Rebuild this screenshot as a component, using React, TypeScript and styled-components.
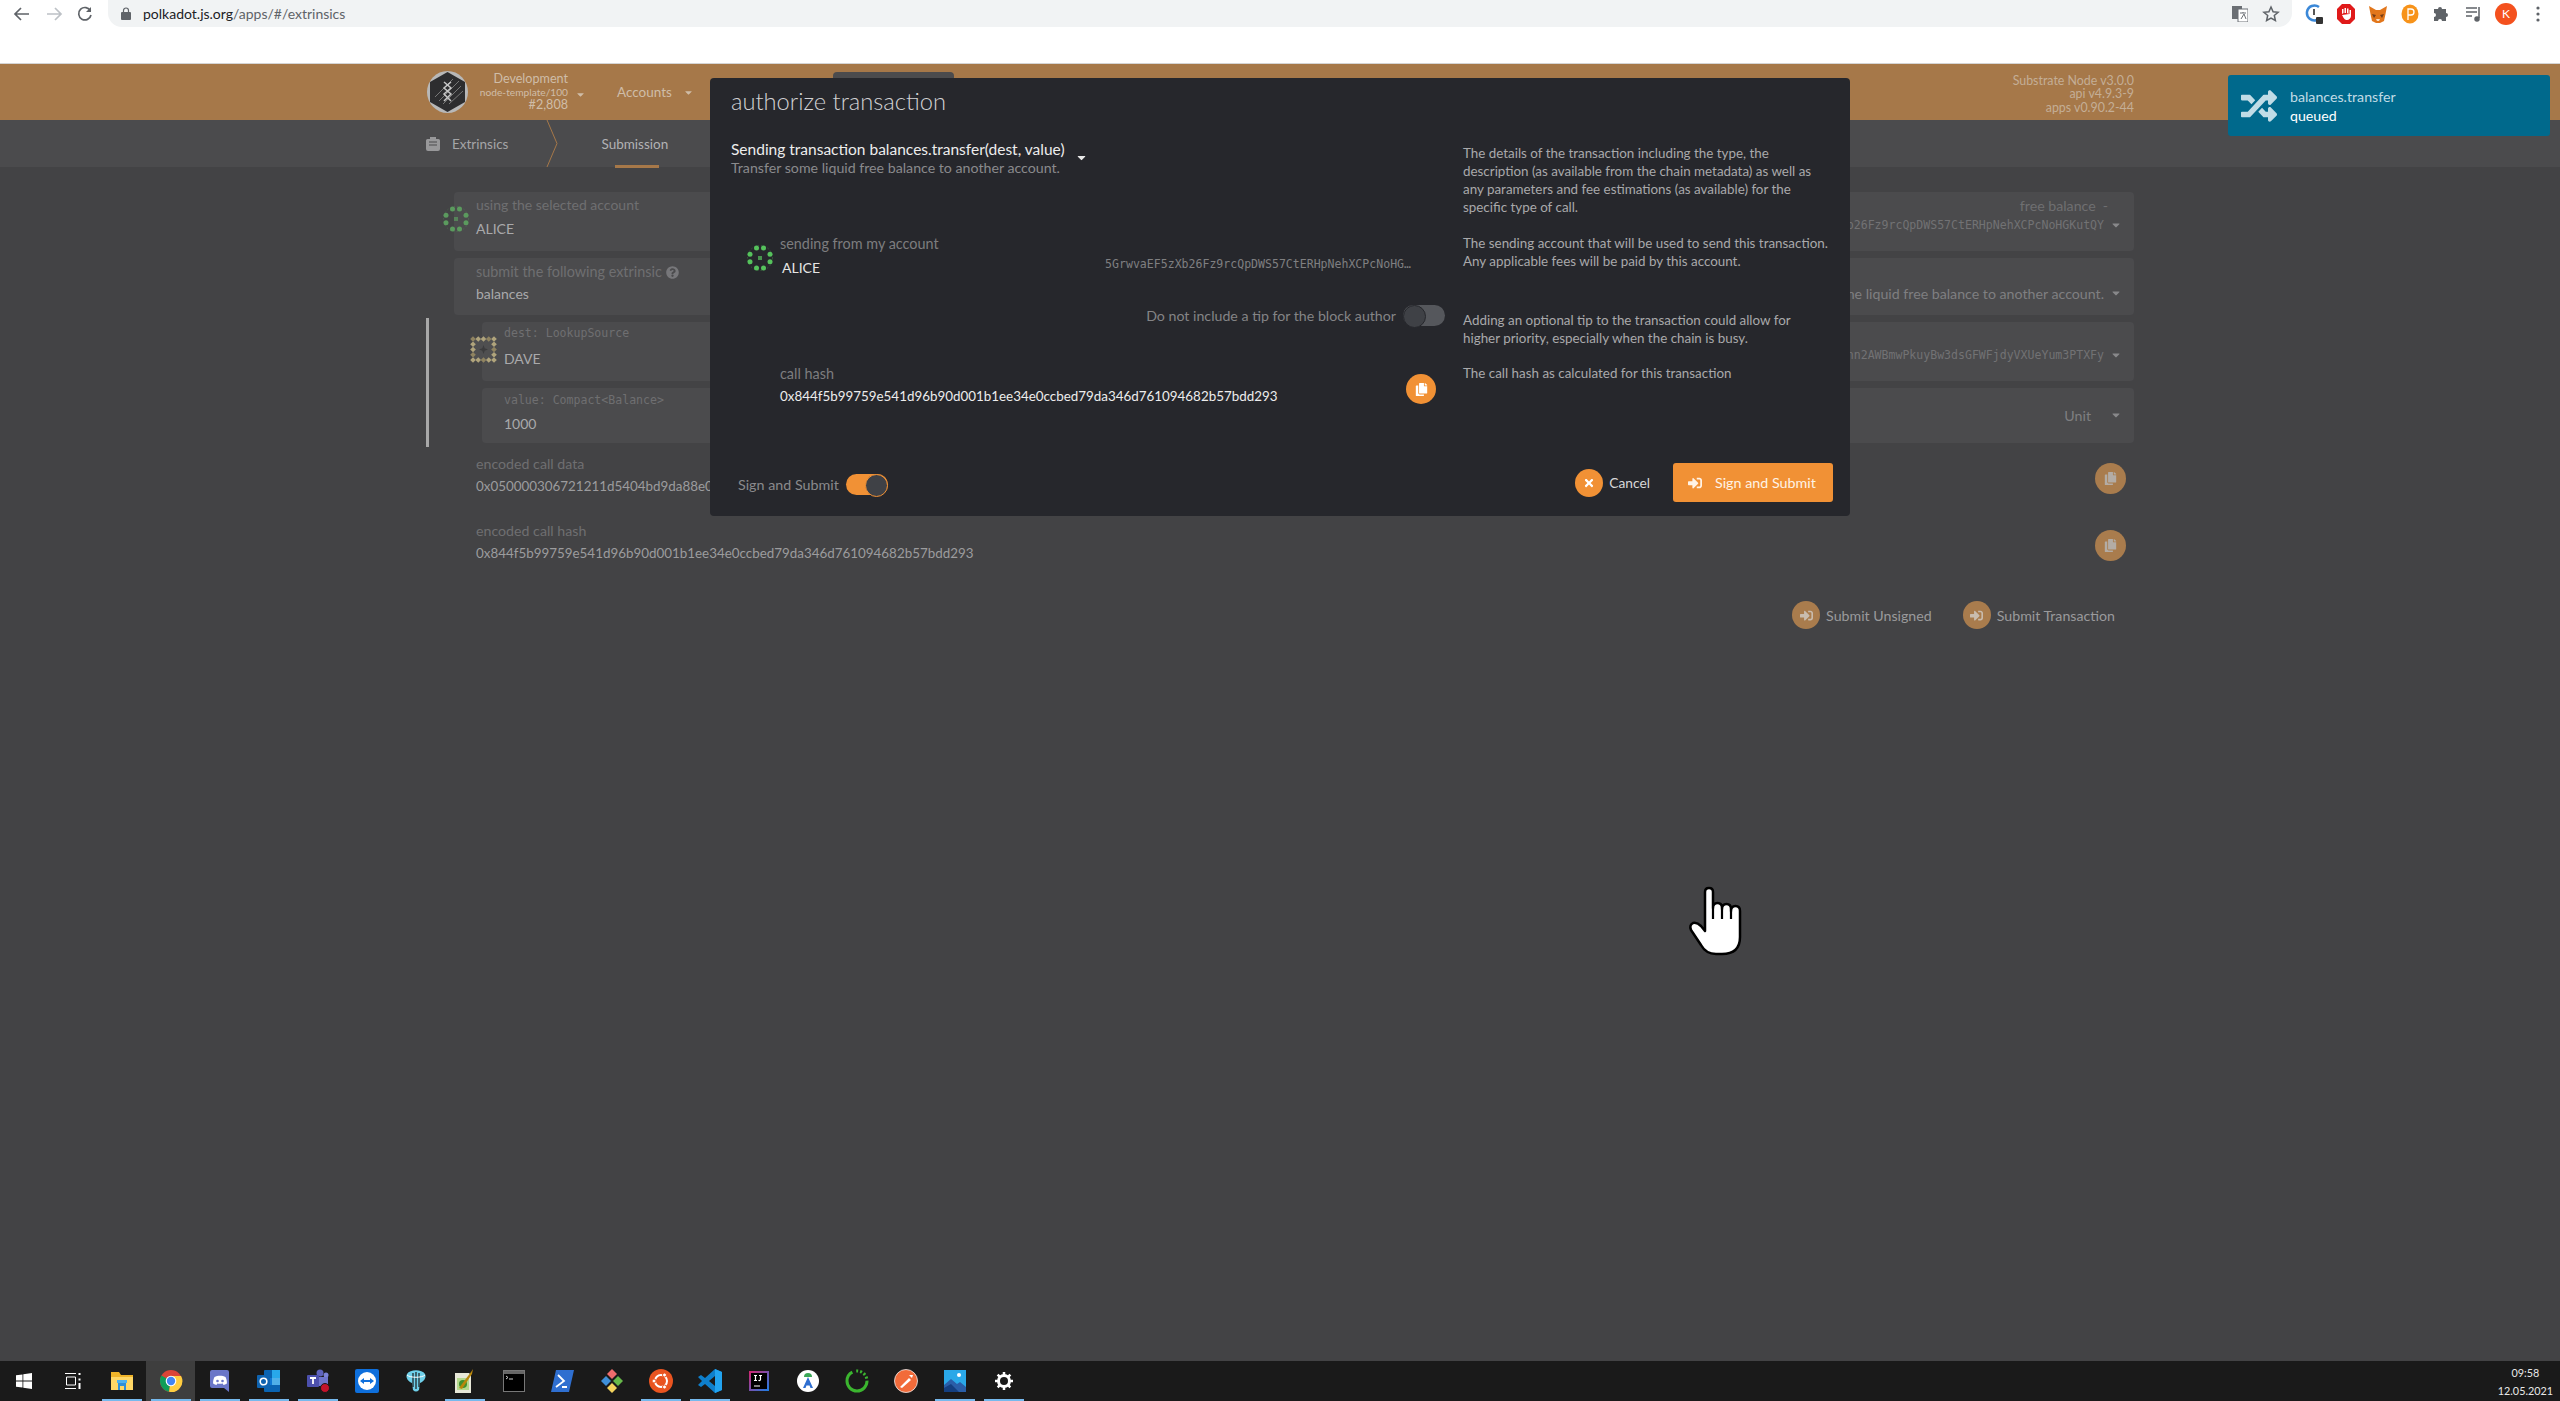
import React from "react";
import styled, { createGlobalStyle } from "styled-components";
import { FaCaretDown, FaCopy, FaRandom, FaSignInAlt, FaTimes, FaQuestionCircle } from "react-icons/fa";

const Global = createGlobalStyle`
  html, body { margin: 0; padding: 0; height: 100%; background: #434345; overflow: hidden; }
  #root { height: 100%; }
  * { box-sizing: border-box; }
`;
const SANS = `"Lato", "Open Sans", sans-serif`;
const MONO = `"DejaVu Sans Mono", "Liberation Mono", monospace`;

const Page = styled.div`position: relative; width: 2560px; height: 1401px; display: flex; flex-direction: column; font-family: ${SANS}; overflow: hidden; background: #434345;`;

/* Browser chrome */
const Chrome = styled.div`height: 64px; background: #fff; border-bottom: 1px solid #d4d4d4; flex: none;`;
const ChromeBar = styled.div`height: 37px; display: flex; align-items: flex-start; padding-left: 13px;`;
const NavIcons = styled.div`display: flex; gap: 14px; width: 95px; height: 27px; align-items: center;`;
const Omnibox = styled.div`width: 2184px; height: 27px; background: #f1f3f4; border-radius: 0 0 14px 14px; display: flex; align-items: center; padding-left: 13px; padding-right: 12px;`;
const Url = styled.div`font-size: 14px; color: #5f6368; margin-left: 12px; flex: 1;`;
const UrlHost = styled.span`color: #202124;`;
const OmniIcons = styled.div`display: flex; gap: 14px; align-items: center; padding-right: 0;`;
const ExtIcons = styled.div`display: flex; align-items: center; height: 27px; gap: 0; padding-left: 6px;`;
const ExtSlot = styled.div`width: 32px; display: flex; justify-content: center; align-items: center;`;
const Avatar = styled.div`width: 22px; height: 22px; border-radius: 50%; background: #f4511e; color: #fff; font-size: 12px; display: flex; align-items: center; justify-content: center;`;

/* App header */
const Header = styled.div`height: 56px; background: #a67849; flex: none; display: flex; align-items: center; padding: 0 426px 0 427px;`;
const Logo = styled.svg`width: 41px; height: 42px; flex: none;`;
const Chain = styled.div`width: 100px; display: flex; flex-direction: column; align-items: flex-end; font-size: 12.6px; color: #cfbda8; line-height: 14px; white-space: nowrap;`;
const ChainInfo = styled.div`font-size: 10.2px; line-height: 12px;`;
const Caret = styled(FaCaretDown)<{ $size?: number; $color?: string }>`
  width: ${p => p.$size ?? 12}px; height: ${p => p.$size ?? 12}px; color: ${p => p.$color ?? "#cfbda8"}; flex: none;
`;
const ChainCaret = styled.div`margin: 0 0 0 7px; padding-top: 2px; width: 12px;`;
const NavItem = styled.div`margin-left: 30px; width: 57px; font-size: 13.5px; color: #cfbda8; white-space: nowrap;`;
const NavCaret = styled.div`margin-left: 9px; display: flex;`;
const NavTabStub = styled.div`width: 121px; height: 48px; align-self: flex-end; margin-left: 139px; background: #4b4b4d; border-radius: 4px 4px 0 0;`;
const Version = styled.div`margin-left: auto; text-align: right; font-size: 12.4px; line-height: 13.5px; color: #c4ae96; padding-top: 4px;`;

/* Tabs */
const TabsBar = styled.div`height: 47px; background: #4b4b4d; flex: none; display: flex; align-items: stretch; padding-left: 426px;`;
const TabIcon = styled.svg`width: 14px; height: 14px; align-self: center; margin-right: 12px;`;
const Tab = styled.div<{ $active?: boolean }>`
  display: flex; align-items: center; position: relative; font-size: 13.5px; color: #a5a5a7; white-space: nowrap;
  ${p => p.$active && `
    margin-left: 43px; color: #b2b2b4;
    &::after { content: ""; position: absolute; left: 14px; width: 44px; bottom: -1px; height: 3px; background: #a67849; }
  `}
`;
const TabChevron = styled.svg`width: 12px; height: 47px; margin-left: 38px; flex: none;`;

/* Page body */
const Main = styled.main`flex: 1; min-height: 0; padding: 25px 0 0 454px; width: 2134px;`;
const Card = styled.div<{ $h: number }>`
  height: ${p => p.$h}px; background: #4b4b4d; border-radius: 4px; position: relative; padding-left: 22px; display: flex; justify-content: space-between;
  margin-bottom: 7px;
`;
const CardLeft = styled.div<{ $top: number }>`padding-top: ${p => p.$top}px; display: flex; flex-direction: column;`;
const CardLabel = styled.div`font-size: 14px; line-height: 18px; color: #6f6f71; white-space: nowrap; display: flex; align-items: center; gap: 4px;`;
const CardLabelWide = styled(CardLabel)`font-size: 14.4px;`;
const MonoLabel = styled.div`font-family: ${MONO}; font-size: 11.55px; line-height: 18px; color: #6f6f71; white-space: nowrap;`;
const CardValue = styled.div<{ $top: number }>`font-size: 14px; line-height: 18px; color: #a9a9ab; margin-top: ${p => p.$top}px; white-space: nowrap;`;
const CardRight = styled.div<{ $top: number }>`display: flex; flex-direction: column; align-items: flex-end; padding: ${p => p.$top}px 12px 0 0;`;
const CardRightRow = styled.div<{ $inset?: number }>`display: flex; align-items: center; gap: 6px; height: 18px; padding-right: ${p => p.$inset ?? 0}px; color: #7f7f81; font-size: 14.2px; white-space: nowrap;`;
const FreeRow = styled(CardRightRow)`margin-bottom: 2px; gap: 7px; color: #6f6f71;`;
const UnitRow = styled(CardRightRow)`gap: 19px;`;
const DimMono = styled.span`font-family: ${MONO}; font-size: 11.55px; color: #727274;`;
const Identicon = styled.svg<{ $left: number; $top: number; $size: number }>`
  position: absolute; left: ${p => p.$left}px; top: ${p => p.$top}px; width: ${p => p.$size}px; height: ${p => p.$size}px;
`;
const ParamGroup = styled.div`margin: -4px 0 -6px -28px; padding: 4px 0 4px 53px; border-left: 3px solid #a8a8a8;`;
const LastCard = styled(Card)`margin-bottom: 0;`;
const Encoded = styled.div`height: 67px; display: flex; align-items: center; justify-content: space-between; padding: 0 8px 0 22px;`;
const EncodedLabel = styled.div`font-size: 14.2px; line-height: 18px; color: #6f6f71;`;
const EncodedValue = styled.div`font-size: 13.4px; line-height: 18px; margin-top: 4px; color: #9c9c9e; white-space: nowrap;`;
const EncodedCopy = styled.div`margin-top: 8px;`;
const RoundBtn = styled.div<{ $size: number; $bg: string; $fg: string; $icon?: number }>`
  width: ${p => p.$size}px; height: ${p => p.$size}px; border-radius: 50%; background: ${p => p.$bg}; color: ${p => p.$fg};
  display: flex; align-items: center; justify-content: center; flex: none;
  svg { width: ${p => p.$icon ?? 13}px; height: ${p => p.$icon ?? 13}px; }
`;
const Actions = styled.div`display: flex; justify-content: flex-end; gap: 31px; padding-right: 19px; margin-top: 26px;`;
const Action = styled.div`display: flex; align-items: center; gap: 6px; font-size: 14.2px; color: #9a9a9c; white-space: nowrap;`;

/* Modal */
const Modal = styled.div`position: absolute; left: 710px; top: 78px; width: 1140px; height: 438px; background: #26272c; border-radius: 4px; display: flex; flex-direction: column;`;
const ModalTitle = styled.h1`margin: 0; height: 57px; padding: 8px 0 0 21px; font-size: 23.7px; line-height: 30px; font-weight: 300; color: #d2d2d4; white-space: nowrap;`;
const ModalGrid = styled.div`display: grid; grid-template-columns: 714px 1fr; grid-template-rows: 95px 70px 60px 90px; column-gap: 18px; padding-left: 21px;`;
const Cell = styled.div`padding-top: 5px; min-width: 0;`;
const Help = styled.div<{ $top: number }>`padding-top: ${p => p.$top}px; font-size: 13.4px; line-height: 18px; color: #a9a9ab; white-space: nowrap;`;
const TxRow = styled.div`display: flex; gap: 10px;`;
const TxText = styled.div`font-size: 15.5px; line-height: 18px; color: #ededed; white-space: nowrap;`;
const TxMeta = styled.div`font-size: 14.2px; line-height: 18px; margin-top: 1px; color: #8a8a8c; white-space: nowrap;`;
const TxCaret = styled.div`padding-top: 11px; display: flex;`;
const Sender = styled.div`position: relative; display: flex; justify-content: space-between; padding: 0 34px 0 49px;`;
const SmallLabel = styled.div`font-size: 14.4px; line-height: 18px; color: #7d7d7f; white-space: nowrap;`;
const SenderName = styled.div`font-size: 14px; line-height: 18px; margin: 6px 0 0 2px; color: #e5e5e5;`;
const Address = styled.div`font-family: ${MONO}; font-size: 11.55px; line-height: 18px; margin-top: 20px; color: #7f7f81; white-space: nowrap;`;
const TipRow = styled.div`display: flex; justify-content: flex-end; align-items: center; gap: 7px; font-size: 14.2px; color: #848486; white-space: nowrap; height: 21px;`;
const Toggle = styled.div<{ $on?: boolean }>`
  width: 42px; height: 21px; border-radius: 11px; flex: none; position: relative; background: ${p => (p.$on ? "#f19135" : "#55575c")};
  &::after { content: ""; position: absolute; top: 0; ${p => (p.$on ? "right: 0;" : "left: 0;")} width: 21px; height: 21px; border-radius: 50%; background: #3f4146; border: 1px solid ${p => (p.$on ? "#f19135" : "#26272c")}; }
`;
const HashRow = styled.div`display: flex; justify-content: space-between; padding: 0 9px 0 49px;`;
const HashValue = styled.div`font-size: 13.4px; line-height: 18px; margin-top: 4px; color: #ededed; white-space: nowrap;`;
const HashCopy = styled.div`margin-top: 9px;`;
const Footer = styled.div`margin-top: auto; padding: 0 17px 14px 28px; display: flex; align-items: center;`;
const FootLabel = styled.div`font-size: 14.3px; color: #8a8a8c; margin-right: 7px; white-space: nowrap; padding-top: 3px;`;
const FootToggle = styled.div`padding-top: 3px;`;
const CancelBtn = styled.div`margin-left: auto; display: flex; align-items: center; gap: 6px; font-size: 13.8px; color: #d8d8d8;`;
const Primary = styled.div`width: 160px; height: 39px; margin-left: 23px; background: #f19135; border-radius: 3px; color: #fff3e6; font-size: 14.3px; display: flex; align-items: center; padding-left: 15px; gap: 13px; svg { width: 14px; height: 14px; }`;

/* Toast */
const Toast = styled.div`position: absolute; left: 2228px; top: 75px; width: 322px; height: 61px; background: #00698c; border-radius: 3px; display: flex; align-items: center; padding-left: 13px; color: #c0dce6; svg { width: 36px; height: 36px; flex: none; }`;
const ToastText = styled.div`margin-left: 13px; font-size: 14.2px; line-height: 19px;`;
const ToastStatus = styled.div`color: #fff;`;

const Cursor = styled.svg`position: absolute; left: 1660px; top: 860px; width: 120px; height: 110px;`;

/* Taskbar */
const Taskbar = styled.div`height: 40px; background: #1a1a1a; flex: none; display: flex; align-items: stretch;`;
const Start = styled.div`width: 48px; display: flex; align-items: center; justify-content: center;`;
const TaskSlot = styled.div<{ $running?: boolean; $active?: boolean }>`
  width: 49px; position: relative; display: flex; align-items: center; justify-content: center; flex: none;
  background: ${p => (p.$active ? "#3e3e3e" : "transparent")};
  ${p => p.$running && `&::after { content: ""; position: absolute; left: 5px; right: 4px; bottom: 0; height: 2px; background: #76b9ed; }`}
`;
const Clock = styled.div`margin-left: auto; padding: 3px 7px 0 0; text-align: center; font-size: 10.8px; line-height: 18px; color: #e8e8e8;`;

const dots: [number, number][] = [[9.5, 3], [16.5, 3], [9.5, 23], [16.5, 23], [3, 9.3], [3, 16.7], [23, 9.3], [23, 16.7]];
const PolkaIcon: React.FC<{ color: string; left: number; top: number }> = ({ color, left, top }) => (
  <Identicon $left={left} $top={top} $size={26} viewBox="0 0 26 26">
    <circle cx="13" cy="13" r="12.5" fill="none" stroke={color} strokeOpacity=".3" strokeDasharray="1.5 2" />
    {dots.map(([x, y]) => <circle key={`${x}-${y}`} cx={x} cy={y} r="2.5" fill={color} />)}
    <rect x="11" y="11" width="4" height="4" fill={color} fillOpacity=".7" />
  </Identicon>
);
const DaveIcon: React.FC<{ left: number; top: number }> = ({ left, top }) => {
  const pts = [0, 1, 2, 3, 4];
  const cells: [number, number][] = [];
  pts.forEach(i => pts.forEach(j => { if (i === 0 || i === 4 || j === 0 || j === 4) cells.push([i, j]); }));
  return (
    <Identicon $left={left} $top={top} $size={27} viewBox="0 0 27 27">
      <rect x="3" y="3" width="21" height="21" fill="#4f4f50" />
      {cells.map(([i, j]) => <path key={`${i}${j}`} d={`M${3 + i * 5.25} ${0.2 + j * 5.25}l2.8 2.8-2.8 2.8-2.8-2.8z`} fill={(i + j) % 3 === 0 ? "#8f8360" : "#b0a47c"} />)}
      <path d="M13.5 9l1.2 3.3 3.3 1.2-3.3 1.2-1.2 3.3-1.2-3.3L9 13.5l3.3-1.2z" fill="#3c3c3d" />
    </Identicon>
  );
};

const TaskIcon: React.FC<{ k: string }> = ({ k }) => {
  switch (k) {
    case "view": return <svg width="18" height="18" viewBox="0 0 18 18" fill="none" stroke="#fff"><path d="M1 1.5h11M1 16.5h11M2.5 5h9v8h-9z" /><path d="M15.5 1v2M15.5 6.5v2M15.5 11v6" strokeWidth="2" /></svg>;
    case "explorer": return <svg width="24" height="22" viewBox="0 0 24 22"><path d="M1 2h8l2 3h12v15H1z" fill="#f0b429" /><path d="M1 7h22v13H1z" fill="#ffd766" /><path d="M8 12h8v8h-2v-4h-4v4H8z" fill="#2f8fd8" /><rect x="7" y="10" width="10" height="3" fill="#4db1ee" /></svg>;
    case "chrome": return <svg width="24" height="24" viewBox="0 0 24 24"><circle cx="12" cy="12" r="11" fill="#db4437" /><path d="M12 12L2.4 6.5A11 11 0 0 0 10 22.8z" fill="#0f9d58" /><path d="M12 7h10.1a11 11 0 0 1-12 15.8z" fill="#ffcd40" /><circle cx="12" cy="12" r="5.3" fill="#fff" /><circle cx="12" cy="12" r="4.2" fill="#4285f4" /></svg>;
    case "discord": return <svg width="20" height="24" viewBox="0 0 20 24"><path d="M2 1h15a2 2 0 0 1 2 2v20l-5-4H2a2 2 0 0 1-2-2V3a2 2 0 0 1 2-2z" fill="#6a76c8" /><path d="M4.5 8c3-1.6 8-1.6 11 0 1 2 1.5 4 1.4 6.5-1.2.8-2.4 1.2-3.4 1.4l-.8-1.4c-1.8.4-3.6.4-5.4 0l-.8 1.4c-1-.2-2.2-.6-3.4-1.4C3 12 3.500 10 4.500 8z" fill="#fff" /><circle cx="7.500" cy="12" r="1.300" fill="#6a76c8" /><circle cx="12.500" cy="12" r="1.300" fill="#6a76c8" /></svg>;
    case "outlook": return <svg width="24" height="24" viewBox="0 0 24 24"><rect x="7" y="1" width="16" height="22" rx="1" fill="#0a64b2" /><rect x="15" y="1" width="8" height="8" fill="#28a8ea" /><rect x="7" y="9" width="8" height="7" fill="#0f78d4" /><rect x="15" y="9" width="8" height="7" fill="#50b0e8" /><rect x="0" y="6" width="13" height="13" rx="1" fill="#0f63b0" /><circle cx="6.500" cy="12.500" r="3.300" fill="none" stroke="#fff" strokeWidth="1.600" /></svg>;
    case "teams": return <svg width="24" height="24" viewBox="0 0 24 24"><circle cx="14" cy="4" r="3.500" fill="#5f63bd" /><circle cx="20" cy="6" r="2.500" fill="#7b83d8" /><path d="M10 8h12v9H10z" fill="#6f75cc" /><rect x="1" y="6" width="12" height="12" rx="1" fill="#4c50ad" /><path d="M4 9h6M7 9v6" stroke="#fff" strokeWidth="1.800" /><circle cx="19" cy="19" r="4.500" fill="#c4132c" stroke="#1a1a1a" /></svg>;
    case "teamviewer": return <svg width="24" height="24" viewBox="0 0 24 24"><rect width="24" height="24" rx="2" fill="#0e6fdc" /><circle cx="12" cy="12" r="9" fill="#fff" /><path d="M5 12l4-3v2h6V9l4 3-4 3v-2H9v2z" fill="#0e6fdc" /></svg>;
    case "sketch": return <svg width="24" height="24" viewBox="0 0 24 24"><path d="M3 5c3-5 15-5 18 0 2 4-2 8-5 9l-1 7c-2 2-4 2-6 0l-1-7C5 13 1 9 3 5z" fill="#6fd0ea" /><path d="M9 4v14M12 3v17M15 4v14" stroke="#1a1a1a" strokeWidth="1.200" /><path d="M3 6c3 3 15 3 18 0" fill="none" stroke="#fff" /></svg>;
    case "npp": return <svg width="24" height="25" viewBox="0 0 24 25"><path d="M2 4h14l2 2v18H2z" fill="#e8e8d8" /><rect x="4" y="9" width="12" height="12" fill="#b4d88c" /><circle cx="10" cy="15" r="4" fill="#3f8f2f" /><path d="M6 19l12-16 2-3-1 5L9 20z" fill="#b8860b" /></svg>;
    case "term": return <svg width="22" height="22" viewBox="0 0 22 22"><rect x=".5" y=".5" width="21" height="21" fill="#000" stroke="#777" /><rect x="1" y="1" width="20" height="3" fill="#666" /><path d="M3 6l2 1.500L3 9M6 9h4" stroke="#ccc" fill="none" /></svg>;
    case "ps": return <svg width="24" height="22" viewBox="0 0 24 22"><path d="M5 0h18l-5 22H0z" fill="#2f6fd0" /><path d="M7 5l6 6-8 6M11 17h5" stroke="#fff" strokeWidth="1.800" fill="none" /></svg>;
    case "git": return <svg width="26" height="26" viewBox="0 0 26 26"><path d="M13 1l5 5-5 5-5-5z" fill="#ef6c6c" /><path d="M24 13l-5 5-5-5 5-5z" fill="#67b84a" /><path d="M13 25l-5-5 5-5 5 5z" fill="#f4d35e" /><path d="M2 13l5-5 5 5-5 5z" fill="#3f8fd8" /></svg>;
    case "ubuntu": return <svg width="24" height="24" viewBox="0 0 24 24"><circle cx="12" cy="12" r="12" fill="#e95420" /><circle cx="12" cy="12" r="6" fill="none" stroke="#fff" strokeWidth="2" /><circle cx="5" cy="12" r="2" fill="#fff" stroke="#e95420" /><circle cx="15.500" cy="6" r="2" fill="#fff" stroke="#e95420" /><circle cx="15.500" cy="18" r="2" fill="#fff" stroke="#e95420" /></svg>;
    case "vscode": return <svg width="24" height="24" viewBox="0 0 24 24"><path d="M17 0l7 3v18l-7 3-10-9-4 3-3-2 4-4-4-4 3-2 4 3z" fill="#0e7fcc" /><path d="M17 0l7 3v18l-7 3z" fill="#22a3ef" /><path d="M17 7l-6 5 6 5z" fill="#1a1a1a" /></svg>;
    case "ij": return <svg width="20" height="20" viewBox="0 0 20 20"><defs><linearGradient id="ijg" x1="0" y1="0" x2="1" y2="1"><stop offset="0" stopColor="#d6246e" /><stop offset="1" stopColor="#1a7fe8" /></linearGradient></defs><rect width="20" height="20" fill="url(#ijg)" /><rect x="2" y="2" width="16" height="16" fill="#000" /><path d="M5 4.500h3M6.500 4.500v5M5 9.500h3M10 4.500h3M11.500 4.500v4a1.200 1.200 0 0 1-2 .8M5 15h6" stroke="#fff" strokeWidth="1.200" fill="none" /></svg>;
    case "android": return <svg width="22" height="22" viewBox="0 0 22 22"><circle cx="11" cy="11" r="11" fill="#fff" /><path d="M7 7a4 4 0 0 1 8 0z" fill="#3aa757" /><path d="M11 7L6 18h2.500l1-2.500h3L13.500 18H16z" fill="#2f6fd0" /></svg>;
    case "ring": return <svg width="24" height="24" viewBox="0 0 24 24"><circle cx="12" cy="12" r="10" fill="none" stroke="#3bb52f" strokeWidth="3" strokeDasharray="42 4 2 2 2 2 2 2 2 2" /></svg>;
    case "postman": return <svg width="24" height="24" viewBox="0 0 24 24"><circle cx="12" cy="12" r="11.500" fill="#f26b3a" stroke="#eee" strokeWidth=".8" /><path d="M6 18l9-9 2 2-9 8zM15 6l3 3 1-3z" fill="#fff" /></svg>;
    case "photos": return <svg width="22" height="22" viewBox="0 0 22 22"><rect width="22" height="22" fill="#2aa8e8" /><circle cx="15" cy="5" r="2" fill="#fff" /><path d="M0 15l7-6 6 5 3-2 6 5v5H0z" fill="#2a5ea8" /><path d="M0 18l7-4 8 8H0z" fill="#143f80" /></svg>;
    case "gear": return <svg width="18" height="18" viewBox="0 0 18 18"><circle cx="9" cy="9" r="5.500" fill="none" stroke="#fff" strokeWidth="3" /><path d="M9 0v18M0 9h18M2.600 2.600l12.800 12.800M15.400 2.600L2.600 15.400" stroke="#fff" strokeWidth="2.500" strokeDasharray="3 12 3" /></svg>;
    default: return null;
  }
};

const apps: { k: string; running?: boolean; active?: boolean }[] = [
  { k: "view" }, { k: "explorer", running: true }, { k: "chrome", running: true, active: true }, { k: "discord", running: true },
  { k: "outlook", running: true }, { k: "teams", running: true }, { k: "teamviewer" }, { k: "sketch" }, { k: "npp", running: true },
  { k: "term" }, { k: "ps" }, { k: "git" }, { k: "ubuntu", running: true }, { k: "vscode", running: true }, { k: "ij" },
  { k: "android" }, { k: "ring" }, { k: "postman" }, { k: "photos", running: true }, { k: "gear", running: true },
];

export default function App() {
  return (
    <Page>
      <Global />
      <Chrome>
        <ChromeBar>
          <NavIcons>
            <svg width="18" height="16" viewBox="0 0 18 16" fill="none" stroke="#5f6368" strokeWidth="1.700"><path d="M16 8H2M8 2L2 8l6 6" /></svg>
            <svg width="18" height="16" viewBox="0 0 18 16" fill="none" stroke="#bdc1c6" strokeWidth="1.700"><path d="M2 8h14M10 2l6 6-6 6" /></svg>
            <svg width="16" height="16" viewBox="0 0 16 16" fill="none" stroke="#5f6368" strokeWidth="1.700"><path d="M13.500 5A6.200 6.200 0 1 0 14 9" /><path d="M14 1v5H9" fill="#5f6368" stroke="none" /></svg>
          </NavIcons>
          <Omnibox>
            <svg width="10" height="13" viewBox="0 0 10 13"><rect y="5" width="10" height="8" rx="1" fill="#5f6368" /><path d="M2.500 5V3.500a2.500 2.500 0 0 1 5 0V5" fill="none" stroke="#5f6368" strokeWidth="1.200" /></svg>
            <Url><UrlHost>polkadot.js.org</UrlHost>/apps/#/extrinsics</Url>
            <OmniIcons>
              <svg width="16" height="16" viewBox="0 0 16 16"><rect x="0" y="0" width="10" height="13" fill="#6b6f74" /><rect x="6" y="3" width="10" height="13" fill="#fff" stroke="#6b6f74" /><path d="M8 7h6M11 6v1M9 13l3-5 2 5" stroke="#6b6f74" fill="none" /></svg>
              <svg width="18" height="18" viewBox="0 0 18 18" fill="none" stroke="#5f6368" strokeWidth="1.500"><path d="M9 2l2.100 4.700 5 .5-3.800 3.300 1.100 5L9 13l-4.400 2.500 1.100-5L1.900 7.200l5-.5z" /></svg>
            </OmniIcons>
          </Omnibox>
          <ExtIcons>
            <ExtSlot><svg width="18" height="22" viewBox="0 0 18 22" fill="none"><path d="M14 4a7.500 7.500 0 1 0-2 13" stroke="#3b88d8" strokeWidth="2.500" /><path d="M9 6v6" stroke="#555" strokeWidth="2" /><rect x="11" y="14" width="7" height="7" rx="1" fill="#333" /></svg></ExtSlot>
            <ExtSlot><svg width="18" height="22" viewBox="0 0 18 22"><path d="M5 1h8l5 5v10l-5 5H5l-5-5V6z" fill="#e01a1a" /><path d="M5 11V6h1.500v4M7.500 10V5H9v5M10 10V5.500h1.500V11M12.500 11V7H14v6c0 2-2 4-4 4s-3-1-5-5z" fill="#fff" /></svg></ExtSlot>
            <ExtSlot><svg width="18" height="18" viewBox="0 0 18 18"><path d="M0 1l7 4h4l7-4-1.500 8L15 16l-4 2H7l-4-2-1.500-7z" fill="#e2761b" /><path d="M3 9l4 1-2 3zM15 9l-4 1 2 3z" fill="#763d16" /><path d="M7 14h4l-1 2H8z" fill="#f6dcc0" /></svg></ExtSlot>
            <ExtSlot><svg width="18" height="20" viewBox="0 0 18 20"><ellipse cx="9" cy="10" rx="8.500" ry="9.500" fill="#f7931a" /><path d="M7 16V5h3a3 3 0 0 1 0 6H7" fill="none" stroke="#fff" strokeWidth="1.300" /></svg></ExtSlot>
            <ExtSlot><svg width="16" height="18" viewBox="0 0 16 18"><path d="M0 4h4a2 2 0 0 1 4 0h4v4a2 2 0 0 1 0 4v4H8a2 2 0 0 0-4 0H0v-4a2 2 0 0 0 0-4z" fill="#5f6368" /></svg></ExtSlot>
            <ExtSlot><svg width="16" height="16" viewBox="0 0 16 16" fill="none" stroke="#5f6368" strokeWidth="1.500"><path d="M0 2h11M0 6h11M0 10h6M13 1v11" /><circle cx="11" cy="13" r="2" fill="#5f6368" /></svg></ExtSlot>
            <ExtSlot><Avatar>K</Avatar></ExtSlot>
            <ExtSlot><svg width="4" height="16" viewBox="0 0 4 16" fill="#5f6368"><circle cx="2" cy="2" r="1.600" /><circle cx="2" cy="8" r="1.600" /><circle cx="2" cy="14" r="1.600" /></svg></ExtSlot>
          </ExtIcons>
        </ChromeBar>
      </Chrome>

      <Header>
        <Logo viewBox="0 0 41 42">
          <ellipse cx="20.500" cy="21" rx="20.500" ry="21" fill="#b8b8b8" />
          <path d="M20.500 1L38 11v20L20.500 41 3 31V11z" fill="#2d2d2f" />
          <path d="M8 26L26 8M12 30L32 10M16 33L34 15M22 33L36 20" stroke="#777" strokeWidth="1" />
          <path d="M17 11l7 6-7 6 7 7M24 11l-7 6 7 6-7 7" fill="none" stroke="#c7c7c7" strokeWidth="1.500" />
        </Logo>
        <Chain>
          <div>Development</div>
          <ChainInfo>node-template/100</ChainInfo>
          <div>#2,808</div>
        </Chain>
        <ChainCaret><Caret $size={11} /></ChainCaret>
        <NavItem>Accounts</NavItem>
        <NavCaret><Caret $size={11} /></NavCaret>
        <NavTabStub />
        <Version>
          <div>Substrate Node v3.0.0</div>
          <div>api v4.9.3-9</div>
          <div>apps v0.90.2-44</div>
        </Version>
      </Header>

      <TabsBar>
        <TabIcon viewBox="0 0 14 14">
          <path d="M4 0h6v2h2.500A1.500 1.500 0 0 1 14 3.500V12a2 2 0 0 1-2 2H2a2 2 0 0 1-2-2V3.500A1.500 1.500 0 0 1 1.500 2H4z" fill="#98989a" />
          <path d="M3 5h8M3 8h8" stroke="#4b4b4d" strokeWidth="1.200" />
        </TabIcon>
        <Tab>Extrinsics</Tab>
        <TabChevron viewBox="0 0 12 47" fill="none"><path d="M1 0l10 23.500L1 47" stroke="#a67849" /></TabChevron>
        <Tab $active>Submission</Tab>
      </TabsBar>

      <Main>
        <Card $h={59}>
          <PolkaIcon color="#5b9a5e" left={-11} top={14} />
          <CardLeft $top={4}>
            <CardLabel>using the selected account</CardLabel>
            <CardValue $top={6}>ALICE</CardValue>
          </CardLeft>
          <CardRight $top={4}>
            <FreeRow $inset={14}>free balance <span>-</span></FreeRow>
            <CardRightRow><DimMono>5GrwvaEF5zXb26Fz9rcQpDWS57CtERHpNehXCPcNoHGKutQY</DimMono><Caret $size={12} $color="#88888a" /></CardRightRow>
          </CardRight>
        </Card>
        <Card $h={57}>
          <CardLeft $top={5}>
            <CardLabelWide>submit the following extrinsic <FaQuestionCircle size={13} color="#77777a" /></CardLabelWide>
            <CardValue $top={4}>balances</CardValue>
          </CardLeft>
          <CardRight $top={26}>
            <CardRightRow>Transfer some liquid free balance to another account. <Caret $size={12} $color="#88888a" /></CardRightRow>
          </CardRight>
        </Card>
        <ParamGroup>
          <Card $h={59}>
            <DaveIcon left={-12} top={14} />
            <CardLeft $top={2}>
              <MonoLabel>dest: LookupSource</MonoLabel>
              <CardValue $top={8}>DAVE</CardValue>
            </CardLeft>
            <CardRight $top={24}>
              <CardRightRow><DimMono>5DAAnrj7VHTznn2AWBmwPkuyBw3dsGFWFjdyVXUeYum3PTXFy</DimMono><Caret $size={12} $color="#88888a" /></CardRightRow>
            </CardRight>
          </Card>
          <LastCard $h={55}>
            <CardLeft $top={3}>
              <MonoLabel>value: Compact&lt;Balance&gt;</MonoLabel>
              <CardValue $top={6}>1000</CardValue>
            </CardLeft>
            <CardRight $top={18}>
              <UnitRow>Unit <Caret $size={12} $color="#88888a" /></UnitRow>
            </CardRight>
          </LastCard>
        </ParamGroup>
        <Encoded>
          <div>
            <EncodedLabel>encoded call data</EncodedLabel>
            <EncodedValue>0x050000306721211d5404bd9da88e0</EncodedValue>
          </div>
          <EncodedCopy><RoundBtn $size={31} $bg="#a97c4d" $fg="#b3aca5"><FaCopy /></RoundBtn></EncodedCopy>
        </Encoded>
        <Encoded>
          <div>
            <EncodedLabel>encoded call hash</EncodedLabel>
            <EncodedValue>0x844f5b99759e541d96b90d001b1ee34e0ccbed79da346d761094682b57bdd293</EncodedValue>
          </div>
          <EncodedCopy><RoundBtn $size={31} $bg="#a97c4d" $fg="#b3aca5"><FaCopy /></RoundBtn></EncodedCopy>
        </Encoded>
        <Actions>
          <Action><RoundBtn $size={28} $bg="#a97c4d" $fg="#c9bcae"><FaSignInAlt /></RoundBtn>Submit Unsigned</Action>
          <Action><RoundBtn $size={28} $bg="#a97c4d" $fg="#c9bcae"><FaSignInAlt /></RoundBtn>Submit Transaction</Action>
        </Actions>
      </Main>

      <Taskbar>
        <Start>
          <svg width="16" height="16" viewBox="0 0 16 16" fill="#fff"><path d="M0 2.300l6.500-.9v6.200H0zM7.300 1.300L16 0v7.600H7.300zM0 8.400h6.500v6.200L0 13.700zM7.300 8.400H16V16l-8.700-1.300z" /></svg>
        </Start>
        {apps.map(a => (
          <TaskSlot key={a.k} $running={a.running} $active={a.active}><TaskIcon k={a.k} /></TaskSlot>
        ))}
        <Clock>
          <div>09:58</div>
          <div>12.05.2021</div>
        </Clock>
      </Taskbar>

      <Modal>
        <ModalTitle>authorize transaction</ModalTitle>
        <ModalGrid>
          <Cell>
            <TxRow>
              <div>
                <TxText>Sending transaction balances.transfer(dest, value)</TxText>
                <TxMeta>Transfer some liquid free balance to another account.</TxMeta>
              </div>
              <TxCaret><Caret $size={13} $color="#e8e8e8" /></TxCaret>
            </TxRow>
          </Cell>
          <Help $top={9}>
            The details of the transaction including the type, the<br />
            description (as available from the chain metadata) as well as<br />
            any parameters and fee estimations (as available) for the<br />
            specific type of call.
          </Help>
          <Cell>
            <Sender>
              <PolkaIcon color="#55c25c" left={16} top={10} />
              <div>
                <SmallLabel>sending from my account</SmallLabel>
                <SenderName>ALICE</SenderName>
              </div>
              <Address>5GrwvaEF5zXb26Fz9rcQpDWS57CtERHpNehXCPcNoHG…</Address>
            </Sender>
          </Cell>
          <Help $top={4}>
            The sending account that will be used to send this transaction.<br />
            Any applicable fees will be paid by this account.
          </Help>
          <Cell>
            <TipRow>Do not include a tip for the block author <Toggle /></TipRow>
          </Cell>
          <Help $top={11}>
            Adding an optional tip to the transaction could allow for<br />
            higher priority, especially when the chain is busy.
          </Help>
          <Cell>
            <HashRow>
              <div>
                <SmallLabel>call hash</SmallLabel>
                <HashValue>0x844f5b99759e541d96b90d001b1ee34e0ccbed79da346d761094682b57bdd293</HashValue>
              </div>
              <HashCopy><RoundBtn $size={30} $bg="#f19135" $fg="#fff"><FaCopy /></RoundBtn></HashCopy>
            </HashRow>
          </Cell>
          <Help $top={4}>The call hash as calculated for this transaction</Help>
        </ModalGrid>
        <Footer>
          <FootLabel>Sign and Submit</FootLabel>
          <FootToggle><Toggle $on /></FootToggle>
          <CancelBtn><RoundBtn $size={28} $bg="#f19135" $fg="#fff" $icon={12}><FaTimes /></RoundBtn>Cancel</CancelBtn>
          <Primary><FaSignInAlt />Sign and Submit</Primary>
        </Footer>
      </Modal>

      <Toast>
        <FaRandom />
        <ToastText>
          balances.transfer
          <ToastStatus>queued</ToastStatus>
        </ToastText>
      </Toast>

      <Cursor viewBox="0 0 120 110">
        <path d="M45 32Q45 28 49 28Q53 28 53 32V48Q53 43 57.500 43Q62 43 62 48V49Q62 44 66.500 44Q71 44 71 49V51Q71 46 75.500 46Q80 46 80 51V77Q80 94 62 94H56Q46 94 41 85L31 70Q29 65 33 63Q37 62 41 66L45 71Z" fill="#fff" stroke="#000" strokeWidth="2.500" strokeLinejoin="round" />
        <path d="M53 48v11M62 49v10M71 51v8" stroke="#000" strokeWidth="2.200" />
      </Cursor>
    </Page>
  );
}
